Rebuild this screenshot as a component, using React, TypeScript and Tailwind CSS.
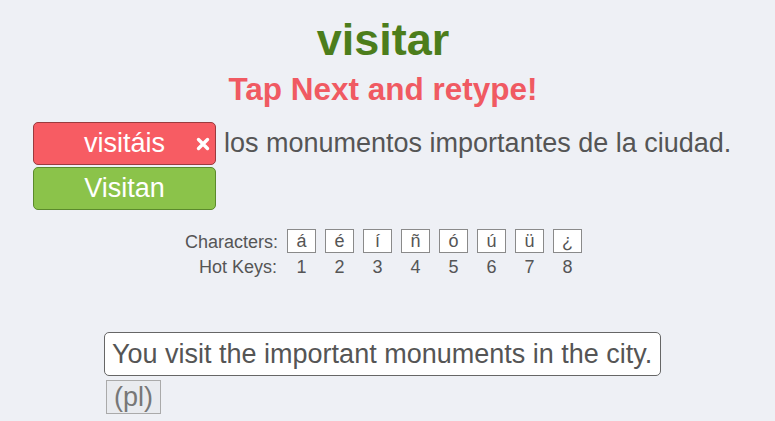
import React from "react";

const chars = ["á", "é", "í", "ñ", "ó", "ú", "ü", "¿"];

export default function App() {
  return (
    <div
      className="w-[775px] h-[421px] overflow-hidden bg-[#eef0f5] text-[#555555]"
      style={{ fontFamily: '"Liberation Sans", Arial, sans-serif' }}
    >
      <div className="w-[766px]">
        <div className="pt-[17px] text-center text-[45px] leading-[45px] font-bold text-[#4c7d1b]">
          visitar
        </div>
        <div className="mt-[12px] text-center text-[31.5px] leading-[31px] font-bold text-[#f05a62]">
          Tap Next and retype!
        </div>
      </div>

      <div className="mt-[17px] flex items-start pl-[33px]">
        <div className="flex flex-col gap-[2px]">
          <div className="relative w-[183px] h-[43px] rounded-[5px] border border-[#9a3b3e] bg-[#f75c63] text-center text-[27px] leading-[41px] text-white">
            visitáis
            <svg
              className="absolute right-[5px] top-[14px]"
              width="14"
              height="14"
              viewBox="0 0 14 14"
            >
              <path
                d="M2.5 2.5 L11.5 11.5 M11.5 2.5 L2.5 11.5"
                stroke="white"
                strokeWidth="3.4"
                strokeLinecap="round"
              />
            </svg>
          </div>
          <div className="w-[183px] h-[43px] rounded-[5px] border border-[#5b8a2c] bg-[#8bc34a] text-center text-[27px] leading-[41px] text-white">
            Visitan
          </div>
        </div>
        <div className="ml-[8px] text-[27px] leading-[43px] text-[#555555]">
          los monumentos importantes de la ciudad.
        </div>
      </div>

      <div className="mt-[19px] pl-[185px] text-[18px] text-[#555555]">
        <div className="flex items-start">
          <div className="w-[92px] text-right leading-[24px] pt-[1px]">Characters:</div>
          <div className="ml-[10px] flex gap-[9px]">
            {chars.map((c) => (
              <div
                key={c}
                className="w-[29px] h-[24px] border border-[#8a8a8a] bg-white text-center leading-[22px]"
              >
                {c}
              </div>
            ))}
          </div>
        </div>
        <div className="mt-[2px] flex items-start">
          <div className="w-[92px] text-right leading-[22px]">Hot Keys:</div>
          <div className="ml-[10px] flex gap-[9px]">
            {chars.map((c, i) => (
              <div key={c} className="w-[29px] text-center leading-[22px]">
                {i + 1}
              </div>
            ))}
          </div>
        </div>
      </div>

      <div className="mt-[54px] pl-[104px]">
        <div className="w-[557px] h-[44px] rounded-[5px] border border-[#666666] bg-white pl-[7px] text-[27px] leading-[42px] text-[#555555]">
          You visit the important monuments in the city.
        </div>
        <div className="mt-[4px] ml-[2px] inline-block h-[34px] border border-[#aaaaaa] bg-[#e9ebef] px-[7px] text-[27px] leading-[32px] text-[#777777]">
          (pl)
        </div>
      </div>
    </div>
  );
}
